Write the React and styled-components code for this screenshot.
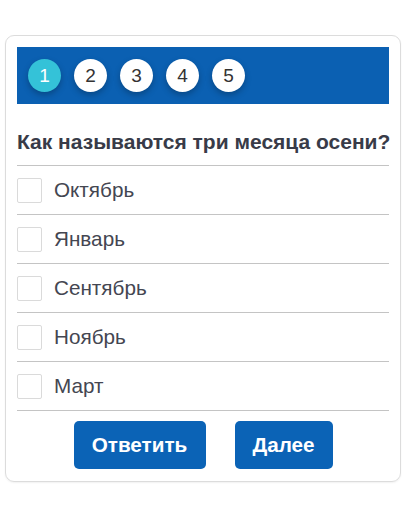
import React from "react";
import styled, { createGlobalStyle } from "styled-components";

const steps = [1, 2, 3, 4, 5];
const answers = ["Октябрь", "Январь", "Сентябрь", "Ноябрь", "Март"];

const App = () => {
  return (
    <>
      <GlobalStyle />
      <Page>
        <QuizCard>
          <StepBar>
            {steps.map((n) => (
              <StepDot key={n} active={n === 1}>
                {n}
              </StepDot>
            ))}
          </StepBar>
          <Question>Как называются три месяца осени?</Question>
          <AnswerList>
            {answers.map((a) => (
              <AnswerRow key={a}>
                <CheckBox />
                <span>{a}</span>
              </AnswerRow>
            ))}
          </AnswerList>
          <Actions>
            <ActionButton type="button" wide>
              Ответить
            </ActionButton>
            <ActionButton type="button">Далее</ActionButton>
          </Actions>
        </QuizCard>
      </Page>
    </>
  );
};

const GlobalStyle = createGlobalStyle`
  html, body {
    margin: 0;
    padding: 0;
    background: #ffffff;
  }
  body {
    font-family: "Liberation Sans", Arial, sans-serif;
  }
`;

const Page = styled.div`
  width: 406px;
  height: 516px;
  padding: 35px 5px 0 5px;
  box-sizing: border-box;
`;

const QuizCard = styled.div`
  width: 396px;
  height: 447px;
  border: 1px solid #dcdcdc;
  border-radius: 9px;
  padding: 11px 11px 0 11px;
  box-sizing: border-box;
  display: flex;
  flex-direction: column;
  box-shadow: 0 1px 2px rgba(0, 0, 0, 0.06);
`;

const StepBar = styled.div`
  height: 57px;
  background: #0b60b2;
  display: flex;
  align-items: center;
  gap: 13px;
  padding: 0 11px;
`;

const StepDot = styled.div`
  width: 33px;
  height: 33px;
  border-radius: 50%;
  background: ${(p) => (p.active ? "#34c2d8" : "#ffffff")};
  color: ${(p) => (p.active ? "#ffffff" : "#333333")};
  display: flex;
  align-items: center;
  justify-content: center;
  font-size: 19px;
  box-shadow: 0 3px 6px rgba(0, 0, 0, 0.25);
`;

const Question = styled.div`
  height: 62px;
  border-bottom: 1px solid #c4c4c4;
  display: flex;
  align-items: center;
  padding-top: 15px;
  box-sizing: border-box;
  font-weight: bold;
  font-size: 21px;
  color: #383b48;
  white-space: nowrap;
`;

const AnswerList = styled.div`
  display: flex;
  flex-direction: column;
`;

const AnswerRow = styled.div`
  height: 49px;
  border-bottom: 1px solid #c4c4c4;
  display: flex;
  align-items: center;
  gap: 12px;
  box-sizing: border-box;
  font-size: 20.7px;
  color: #444651;
`;

const CheckBox = styled.div`
  width: 25px;
  height: 25px;
  border: 1px solid #dadada;
  box-sizing: border-box;
  border-radius: 2px;
  margin-top: 1px;
`;

const Actions = styled.div`
  display: flex;
  justify-content: center;
  gap: 29px;
  padding-top: 10px;
`;

const ActionButton = styled.button`
  width: ${(p) => (p.wide ? "132px" : "98px")};
  height: 48px;
  border: none;
  border-radius: 5px;
  background: #0b63b6;
  color: #ffffff;
  font-family: "Liberation Sans", Arial, sans-serif;
  font-weight: bold;
  font-size: 20.7px;
  cursor: pointer;
`;

export default App;
